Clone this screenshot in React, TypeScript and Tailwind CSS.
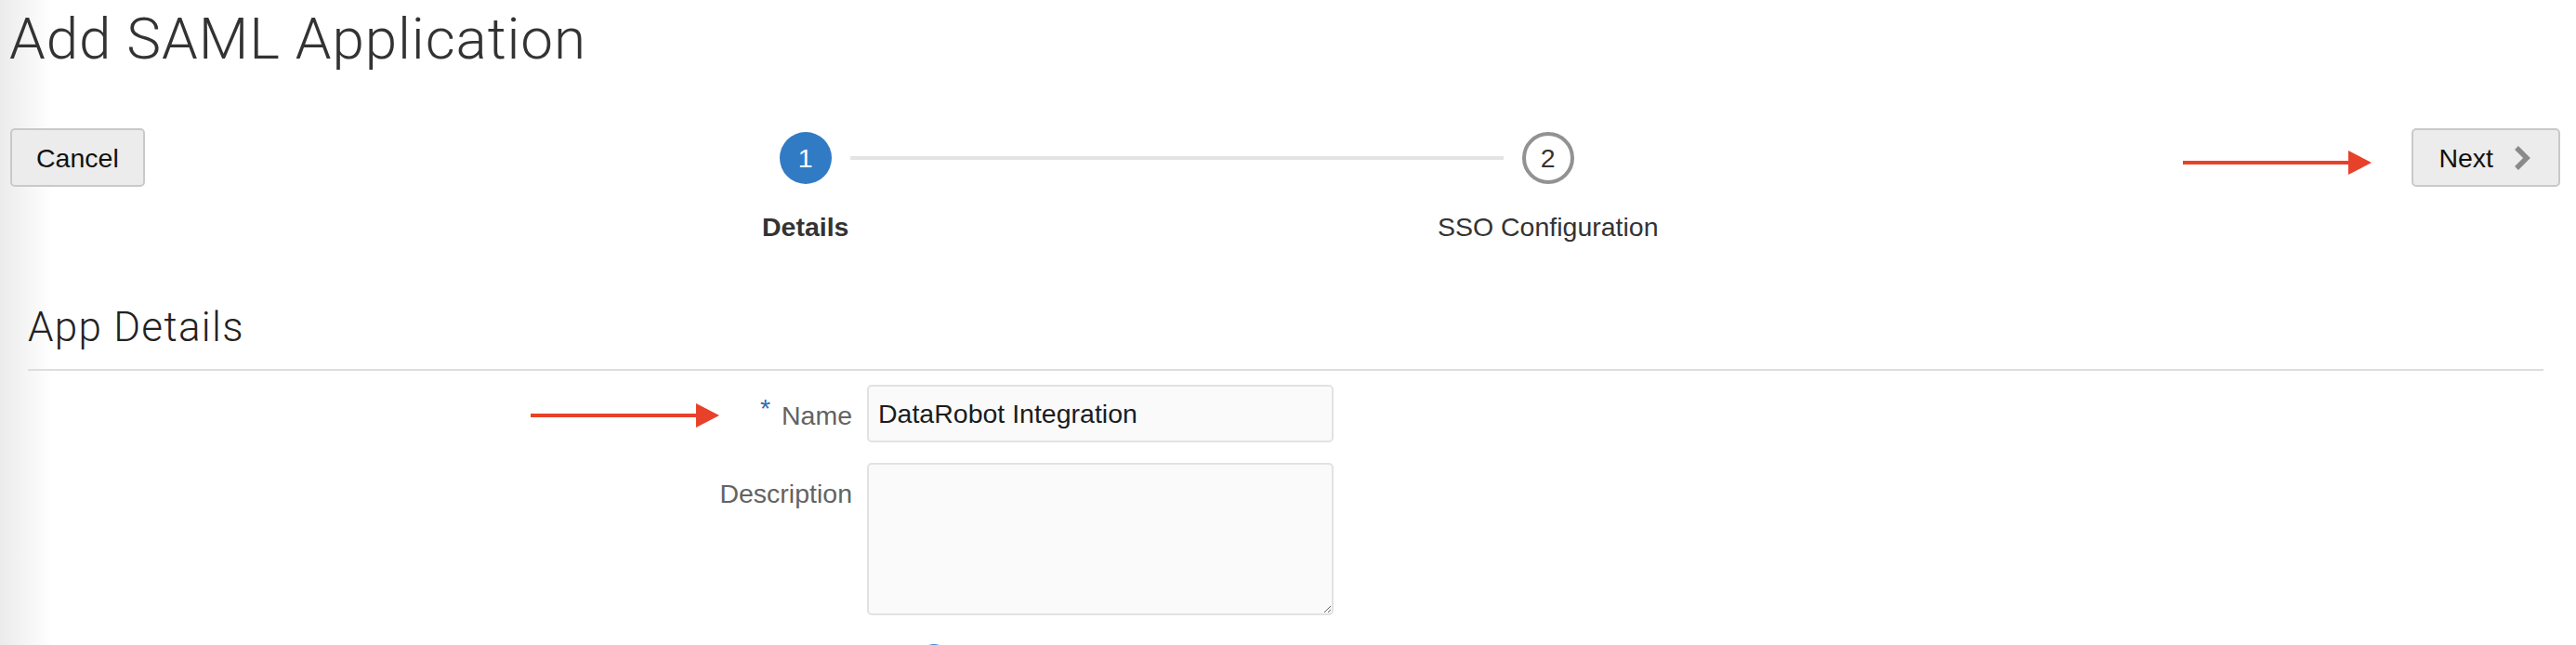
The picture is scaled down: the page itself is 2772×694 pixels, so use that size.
import React from 'react';

const RedArrow: React.FC<{ className?: string }> = ({ className }) => (
    <svg className={className} width="203" height="26" viewBox="0 0 203 26">
        <rect x="0" y="11" width="180" height="4" fill="#e8412a" />
        <polygon points="178,0 203,13 178,26" fill="#e8412a" />
    </svg>
);

const App: React.FC = () => {
    return (
        <div className="w-full h-[694px] overflow-hidden bg-[linear-gradient(to_right,#ebebeb,#ffffff_56px)] font-['Liberation_Sans',Arial,sans-serif] text-[28.5px] leading-8 text-[#222]">
            <h1 className="pl-[10px] pt-[11px] font-['Roboto','Liberation_Sans',sans-serif] font-light text-[62px] leading-[62px] tracking-[0.9px] text-[#333] whitespace-nowrap">
                Add SAML Application
            </h1>

            {/* toolbar: cancel / train / next */}
            <div className="mt-[65px] flex items-start pl-[11px] pr-[17px]">
                <button className="h-[63px] px-[26px] bg-[#ececec] border-2 border-[#c9c9c9] rounded-[5px] text-[#111]">
                    Cancel
                </button>

                <div className="ml-[683px] mt-[4px] w-[855px]">
                    <div className="flex items-center">
                        <div className="w-[56px] h-[56px] rounded-full bg-[#317bc4] text-white flex items-center justify-center">1</div>
                        <div className="flex-1 mx-5 h-[4px] bg-[#e4e4e4]"></div>
                        <div className="w-[56px] h-[56px] rounded-full border-4 border-[#929292] bg-white text-[#333] flex items-center justify-center">2</div>
                    </div>
                    <div className="mt-[30px] flex justify-between">
                        <div className="w-[56px] flex justify-center whitespace-nowrap font-bold text-[#333]">Details</div>
                        <div className="w-[56px] flex justify-center whitespace-nowrap text-[#333]">SSO Configuration</div>
                    </div>
                </div>

                <div className="ml-auto flex items-start">
                    <RedArrow className="mt-[24px] mr-[43px]" />
                    <button className="h-[63px] pl-[27px] pr-[29px] bg-[#ececec] border-2 border-[#c9c9c9] rounded-[5px] text-[#111] flex items-center gap-[21px]">
                        Next
                        <svg width="20" height="28" viewBox="0 0 20 28">
                            <path d="M4 3 L15 14 L4 25" fill="none" stroke="#8a8a8a" strokeWidth="5.5" />
                        </svg>
                    </button>
                </div>
            </div>

            <div className="mt-[66px] px-[30px] pr-[35px]">
                <h2 className="font-['Roboto','Liberation_Sans',sans-serif] font-light text-[44px] leading-[52px] tracking-[1.3px] text-[#222]">App Details</h2>
                <div className="mt-[19px] h-[2px] bg-[#dedede]"></div>
            </div>

            <div className="mt-[15px] flex flex-col gap-[22px]">
                <div className="flex items-start">
                    <div className="w-[933px] pr-4 pt-[17px] flex justify-end items-center">
                        <RedArrow className="mr-[44px]" />
                        <span className="text-[#2e6db4] relative -top-[8px] mr-[12px]">*</span>
                        <span className="text-[#636363]">Name</span>
                    </div>
                    <input
                        className="w-[502px] h-[62px] px-[10px] bg-[#fafafa] border-2 border-[#e2e2e2] rounded-[5px] text-[#1c1c1c] outline-none"
                        defaultValue="DataRobot Integration"
                    />
                </div>
                <div className="flex items-start">
                    <div className="w-[933px] pr-4 pt-[17px] flex justify-end">
                        <span className="text-[#636363]">Description</span>
                    </div>
                    <textarea className="w-[502px] h-[164px] px-[10px] bg-[#fafafa] border-2 border-[#e2e2e2] rounded-[5px] outline-none"></textarea>
                </div>
            </div>

            <div className="mt-[31px] flex">
                <div className="ml-[988px] w-[34px] h-[34px] rounded-full bg-[#3f86cc]"></div>
            </div>
        </div>
    );
};

export default App;
